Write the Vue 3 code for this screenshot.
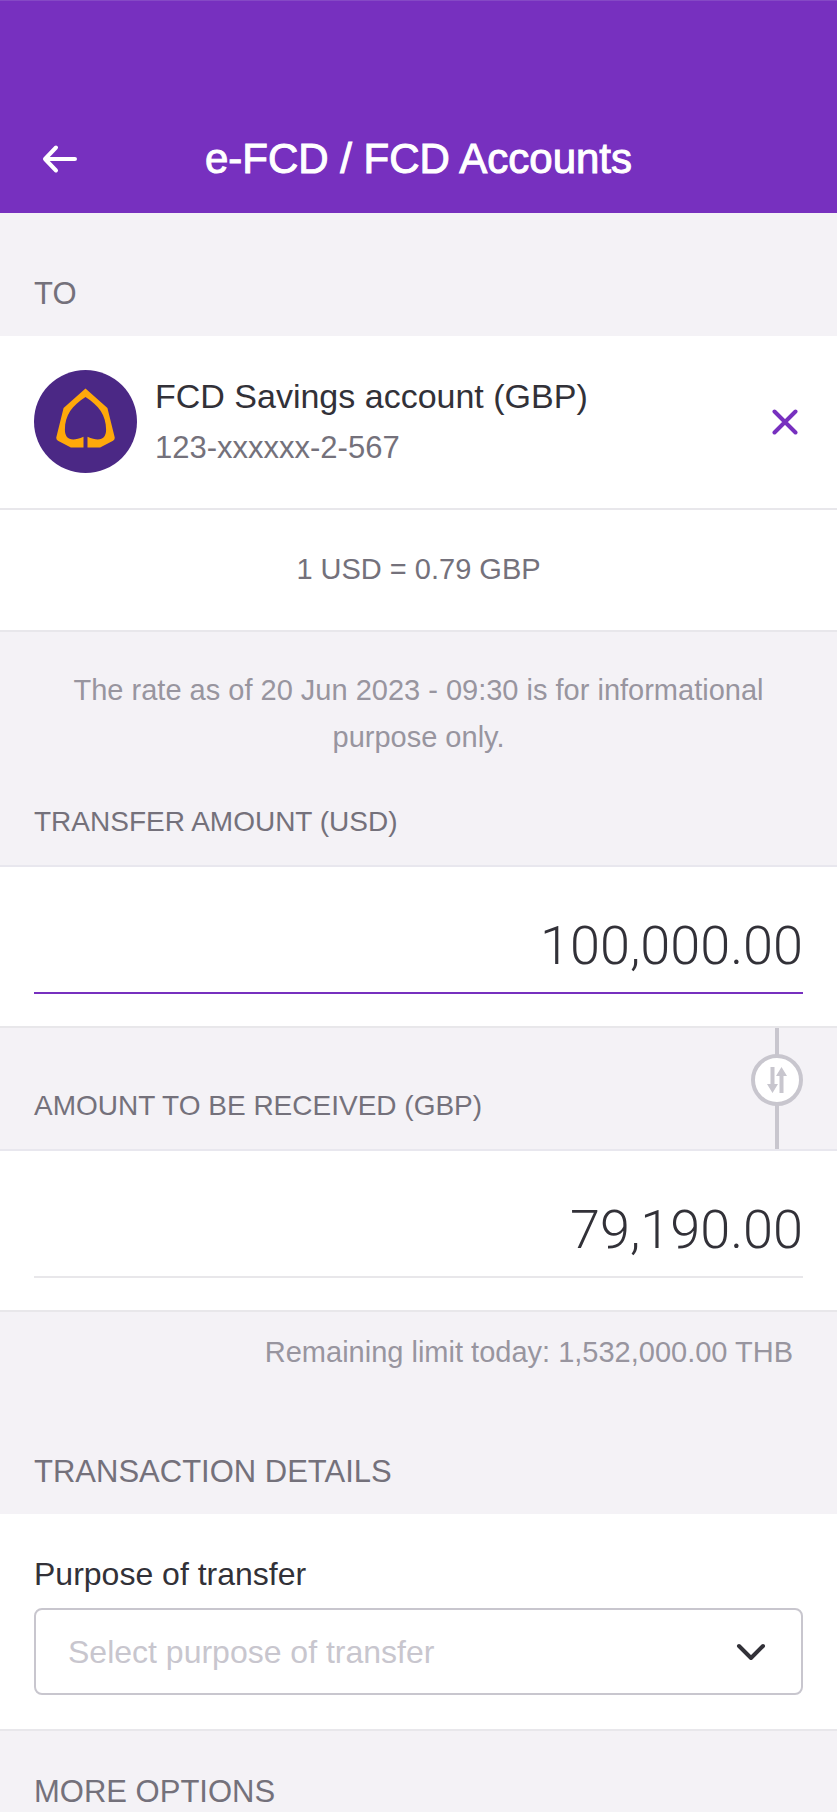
<script setup>
import { ref } from 'vue'

const sendAmount = ref('100,000.00')
const receiveAmount = ref('79,190.00')
const purpose = ref('')
</script>

<template>
  <div class="page">
    <header class="app-bar">
      <button class="icon-button back" type="button" aria-label="Back">
        <svg width="36" height="30" viewBox="0 0 36 30" fill="none" stroke="currentColor" stroke-width="4" stroke-linecap="round" stroke-linejoin="round">
          <path d="M14 3.500 3 15l11 11.500M3 15h30" />
        </svg>
      </button>
      <h1>e-FCD / FCD Accounts</h1>
    </header>

    <main>
      <h2 class="section-title first">TO</h2>
      <section class="card account">
        <svg class="logo" viewBox="0 0 310 310" aria-hidden="true">
          <circle cx="155" cy="155" r="155" fill="#4b2885" />
          <path fill="#ffa90a" d="M155 56 221 114 243 203Q244 209 238 213L199 233H161V201C198 217 217 208 217 180C217 135 195 107 155 81C115 107 93 135 93 180C93 208 112 217 149 201V233H111L72 213Q66 209 67 203L89 114Z" />
        </svg>
        <div class="account-text">
          <div class="account-name">FCD Savings account (GBP)</div>
          <div class="account-number">123-xxxxxx-2-567</div>
        </div>
        <button class="icon-button remove" type="button" aria-label="Remove account">
          <svg width="26" height="26" viewBox="0 0 26 26" fill="none" stroke="currentColor" stroke-width="4" stroke-linecap="round">
            <path d="M2.500 2.500l21 21M23.500 2.500l-21 21" />
          </svg>
        </button>
      </section>
      <section class="card rate">1 USD = 0.79 GBP</section>

      <p class="note rate-note">The rate as of 20 Jun 2023 - 09:30 is for informational purpose only.</p>

      <div class="field-head">
        <label for="send">TRANSFER AMOUNT (USD)</label>
      </div>
      <section class="card amount">
        <input id="send" v-model="sendAmount" class="active" type="text" inputmode="decimal" />
      </section>

      <div class="field-head receive">
        <label for="receive">AMOUNT TO BE RECEIVED (GBP)</label>
        <div class="connector">
          <button class="swap" type="button" aria-label="Swap currencies">
            <svg width="20" height="28" viewBox="0 0 20 28" fill="currentColor">
              <path d="M3.500 1h4v17H11L5.500 27 0 18h3.500zM12.500 27h4V10H20L14.500 1 9 10h3.500z" />
            </svg>
          </button>
        </div>
      </div>
      <section class="card amount">
        <input id="receive" v-model="receiveAmount" type="text" inputmode="decimal" />
      </section>

      <p class="note limit">Remaining limit today: 1,532,000.00 THB</p>

      <h2 class="section-title">TRANSACTION DETAILS</h2>
      <section class="card details">
        <label for="purpose">Purpose of transfer</label>
        <div class="select-box">
          <select id="purpose" v-model="purpose">
            <option value="">Select purpose of transfer</option>
          </select>
          <svg class="chevron" width="30" height="18" viewBox="0 0 30 18" fill="none" stroke="currentColor" stroke-width="4" stroke-linecap="round" stroke-linejoin="round">
            <path d="M3 3l12 12L27 3" />
          </svg>
        </div>
      </section>

      <h2 class="section-title more">MORE OPTIONS</h2>
    </main>
  </div>
</template>

<style>
body {
  margin: 0;
  background: #f4f2f6;
}
</style>

<style scoped>
.page {
  min-height: 100vh;
  box-sizing: border-box;
  background: #f4f2f6;
  color: #323138;
  font-family: "Liberation Sans", Arial, sans-serif;
}
.page * {
  box-sizing: border-box;
}
h1,
h2,
p {
  margin: 0;
  font-weight: 400;
}
.icon-button {
  display: grid;
  place-items: center;
  padding: 0;
  border: 0;
  background: none;
}
.app-bar {
  display: grid;
  grid-template-columns: 52px 1fr 52px;
  align-items: center;
  padding: 103px 34px 0;
  height: 213px;
  background: #7730bf;
  border-top: 1px solid #8549c5;
  color: #fff;
}
.back {
  width: 52px;
  height: 52px;
  color: #fff;
}
h1 {
  font-size: 42px;
  line-height: 52px;
  text-align: center;
  -webkit-text-stroke: 1px currentColor;
}
.section-title {
  padding: 61px 34px 22px;
  font-size: 31px;
  line-height: 40px;
  color: #74717b;
}
.section-title.more {
  padding-top: 41px;
  padding-bottom: 0;
}
.card {
  background: #fff;
  border-bottom: 2px solid #e8e7eb;
}
.account {
  display: flex;
  align-items: center;
  gap: 18px;
  padding: 34px 35px 35px 34px;
}
.logo {
  width: 103px;
  height: 103px;
  flex: none;
}
.account-text {
  flex: 1;
  padding-bottom: 2px;
}
.account-name {
  font-size: 34px;
  line-height: 44px;
}
.account-number {
  margin-top: 10px;
  font-size: 31px;
  line-height: 40px;
  color: #74717b;
}
.remove {
  width: 34px;
  height: 34px;
  color: #7730bf;
}
.rate {
  padding: 36px 34px 37px;
  font-size: 29px;
  line-height: 47px;
  text-align: center;
  color: #74717b;
}
.note {
  font-size: 29px;
  line-height: 47px;
  color: #98959f;
}
.rate-note {
  padding: 35px 60px 0;
  text-align: center;
}
.limit {
  padding: 17px 44px 15px;
  text-align: right;
}
.field-head {
  display: flex;
  justify-content: space-between;
  align-items: flex-end;
  padding: 41px 34px 0;
  border-bottom: 2px solid #e8e7ee;
}
.field-head label {
  padding-bottom: 23px;
  font-size: 28px;
  line-height: 40px;
  color: #74717b;
}
.field-head.receive {
  padding-top: 0;
}
.connector {
  display: flex;
  justify-content: center;
  width: 52px;
  height: 121px;
  padding-top: 26px;
  background: linear-gradient(#c8c6ce, #c8c6ce) center / 4px 100% no-repeat;
}
.swap {
  display: grid;
  place-items: center;
  width: 52px;
  height: 52px;
  padding: 0;
  border: 4px solid #c8c6ce;
  border-radius: 50%;
  background: #fff;
  color: #c8c6ce;
}
.amount {
  padding: 32px 34px;
  border-bottom-color: #e8e7ea;
}
.amount input {
  display: block;
  width: 100%;
  height: 95px;
  padding: 0;
  border: 0;
  border-bottom: 2px solid #e8e7ea;
  outline: 0;
  background: none;
  color: #323138;
  font-family: Roboto, "Liberation Sans", sans-serif;
  font-size: 54px;
  font-weight: 300;
  text-align: right;
}
.amount input.active {
  border-bottom-color: #7730bf;
}
.details {
  padding: 40px 34px 34px;
}
.details label {
  display: block;
  font-size: 32px;
  line-height: 40px;
}
.select-box {
  position: relative;
  margin-top: 14px;
}
select {
  display: block;
  width: 100%;
  height: 87px;
  padding: 0 80px 0 32px;
  border: 2px solid #c8c6ce;
  border-radius: 8px;
  appearance: none;
  background: #fff;
  color: #c8c6ce;
  font-family: inherit;
  font-size: 32px;
}
.chevron {
  position: absolute;
  top: 50%;
  right: 37px;
  margin-top: -9px;
  pointer-events: none;
}
</style>
